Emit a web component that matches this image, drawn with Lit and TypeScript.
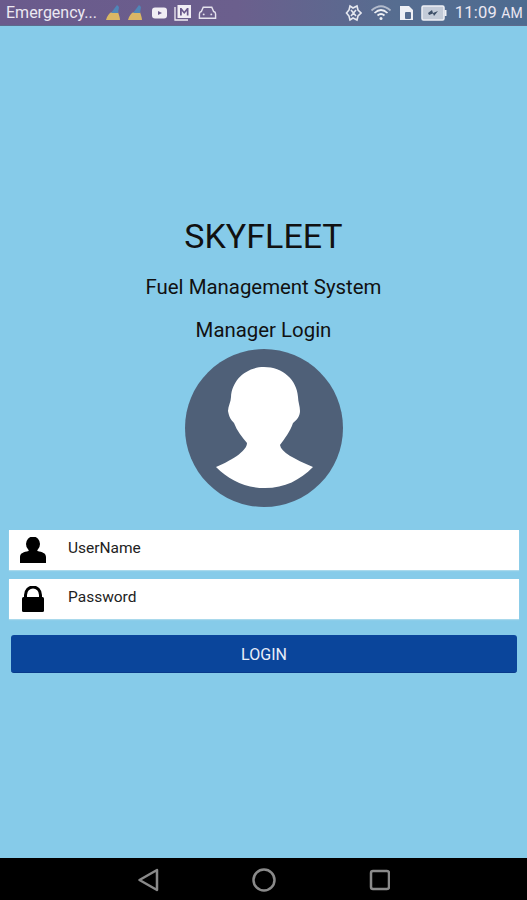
import { LitElement, html, css } from "lit";
import { customElement } from "lit/decorators.js";

@customElement("app-root")
export class AppRoot extends LitElement {
  static styles = css`
    :host { display: flex; flex-direction: column; height: 900px; width: 527px; overflow: hidden; background: #86cbe9; font-family: Roboto, "Liberation Sans", sans-serif; color: #111; }
    .status { height: 26px; flex: none; display: flex; align-items: center; padding: 0 4px 0 6px; box-sizing: border-box; background: linear-gradient(90deg, #6a5a8c 0%, #6b5f8d 45%, #566d90 75%, #4d6b90 100%); border-bottom: 1px solid #5d6a8c; color: #ece8f2; font-size: 16px; }
    .em { width: 99px; white-space: nowrap; }
    .sicons { display: flex; align-items: center; gap: 6px; }
    .video { margin-left: 2px; }
    .sright { margin-left: auto; display: flex; align-items: center; gap: 7px; }
    .gear { margin-right: 1px; }
    .time { font-size: 16.500px; margin-left: 1px; letter-spacing: .2px; }
    .time small { font-size: 14px; }
    main { flex: 1; display: flex; flex-direction: column; align-items: center; padding-top: 190px; box-sizing: border-box; }
    h1 { margin: 0; font-weight: 400; font-size: 34px; line-height: 40px; }
    .sub { font-size: 20.400px; line-height: 24px; margin-top: 19px; }
    .avatar { display: block; width: 158px; height: 158px; margin-top: 7px; }
    .field { align-self: stretch; margin: 0 8px 0 9px; height: 40px; background: #fff; display: flex; align-items: center; box-shadow: 0 1px 1px #a9d9ec; font-size: 15.500px; color: #222; }
    .f1 { margin-top: 23px; }
    .f2 { margin-top: 9px; }
    .ic { width: 59px; flex: none; padding-left: 10px; box-sizing: border-box; display: flex; }
    .label { position: relative; top: -2px; }
    button { align-self: stretch; margin: 16px 10px 0 11px; height: 38px; background: #0a459b; border: none; border-bottom: 1px solid #083a8a; border-radius: 3px; color: #e8eef8; font: 400 16px Roboto, "Liberation Sans", sans-serif; padding: 2px 0 0; }
    nav { height: 42px; flex: none; background: #000; display: flex; align-items: center; justify-content: center; padding-top: 2px; box-sizing: border-box; }
    nav svg { display: block; }
  `;

  render() {
    return html`
      <div class="status">
        <span class="em">Emergency...</span>
        <div class="sicons">
          ${[0, 1].map(() => html`<svg width="16" height="17" viewBox="0 0 16 17"><path d="M1 16 C2 12 4 9 7 8 L13 8 C14 11 15 14 15 16 Z" fill="#d9b765"/><path d="M6 9 L12 1 L14 3 L13 9 Z" fill="#4f86b8"/></svg>`)}
          <svg class="video" width="17" height="14" viewBox="0 0 17 14"><rect x="1" y="1.500" width="15" height="11" rx="3" fill="#f1eef4"/><path d="M7 5 L11 7 L7 9 Z" fill="#6a5a8c"/></svg>
          <svg width="18" height="17" viewBox="0 0 18 17"><path d="M1 3 V16 H14" fill="none" stroke="#f1eef4" stroke-width="1.300"/><rect x="3.500" y="1" width="13.500" height="13" fill="#f1eef4"/><path d="M6 11.500 V4 H7.500 L10.200 7.500 L13 4 H14.500 V11.500 H12.800 V7 L10.200 10 L7.800 7 V11.500 Z" fill="#6a5a8c"/></svg>
          <svg width="19" height="15" viewBox="0 0 20 15" fill="none" stroke="#e6e3ee" stroke-width="1.500"><path d="M1.500 13.500 V9 Q1.500 7 3.500 6.500 L5.500 2 H14.500 L16.500 6.500 Q18.500 7 18.500 9 V13.500 Z"/><circle cx="6" cy="9.500" r="1" fill="#e6e3ee" stroke="none"/><circle cx="14" cy="9.500" r="1" fill="#e6e3ee" stroke="none"/></svg>
        </div>
        <div class="sright">
          <svg class="gear" width="17" height="18" viewBox="0 0 17 18" fill="none" stroke="#e6e8f0" stroke-width="1.600"><path d="M5 2 L8 4 L12 2 L13 6 L16 9 L13 12 L12 16 L8 14 L5 16 L4 12 L1.500 9 L4 6 Z M6 6 L11 12 M11 6 L6 12"/></svg>
          <svg width="22" height="17" viewBox="0 0 22 17" fill="none" stroke="#eef0f5" stroke-width="1.700"><path d="M1.500 6.500 Q11 -2 20.500 6.500" stroke-opacity=".6"/><path d="M4.500 9 Q11 3 17.500 9"/><path d="M7.500 11.500 Q11 8.500 14.500 11.500"/><circle cx="11" cy="14.500" r="1.500" fill="#eef0f5" stroke="none"/></svg>
          <svg width="15" height="16" viewBox="0 0 15 16"><path d="M1 1 H10 L14 5 V15 H1 Z" fill="#eef0f5"/><rect x="6" y="7" width="6" height="7" rx="1" fill="#566d90"/></svg>
          <svg width="26" height="16" viewBox="0 0 26 16"><rect x="1" y="1" width="22" height="14" rx="1.500" fill="#c3cbd8" stroke="#eef0f5" stroke-width="1.500"/><rect x="23.500" y="5" width="2" height="6" fill="#eef0f5"/><path d="M7 8 L11 5 L12 8 L17 6 L13 11 L12 8.500 L8 10 Z" fill="#3d4f68"/></svg>
          <span class="time">11:09 <small>AM</small></span>
        </div>
      </div>
      <main>
        <h1>SKYFLEET</h1>
        <div class="sub">Fuel Management System</div>
        <div class="sub">Manager Login</div>
        <svg class="avatar" viewBox="0 0 158 158">
          <circle cx="79" cy="79" r="79" fill="#4f6078"/>
          <path d="M79 18 C61 18 47 31 46 48 C46 53 43 57 43 62 C44 68 46 71 49 74 C52 82 57 88 62 94 C62 101 50 110 31 118 C44 131 60 139 80 139 C100 139 115 131 128 118 C109 110 96 103 95 96 C100 89 105 83 108 74 C112 71 115 67 115 62 C115 57 113 53 113 48 C112 31 98 18 79 18 Z" fill="#fff"/>
        </svg>
        <div class="field f1">
          <span class="ic"><svg width="28" height="26" viewBox="0 0 28 26"><ellipse cx="14" cy="7" rx="7" ry="7.500" /><path d="M10 12 H18 L18.500 14 C23 15 27 16 27 20 V26 H1 V20 C1 16 5 15 9.500 14 Z"/></svg></span>
          <span class="label">UserName</span>
        </div>
        <div class="field f2">
          <span class="ic"><svg width="28" height="26" viewBox="0 0 28 26"><path d="M6.500 11 V9 A7.500 8 0 0 1 21.500 9 V11" fill="none" stroke="#000" stroke-width="3"/><rect x="3" y="11" width="22" height="15" rx="1.500"/></svg></span>
          <span class="label">Password</span>
        </div>
        <button>LOGIN</button>
      </main>
      <nav>
        <svg width="252" height="24" viewBox="0 0 252 24" fill="none" stroke="#8a8a8a" stroke-width="2.500" stroke-linejoin="round">
          <path d="M19 2 L1.500 12 L19 22 Z"/>
          <circle cx="126" cy="12" r="10.500"/>
          <rect x="233" y="3" width="18" height="18" rx="2"/>
        </svg>
      </nav>
    `;
  }
}
